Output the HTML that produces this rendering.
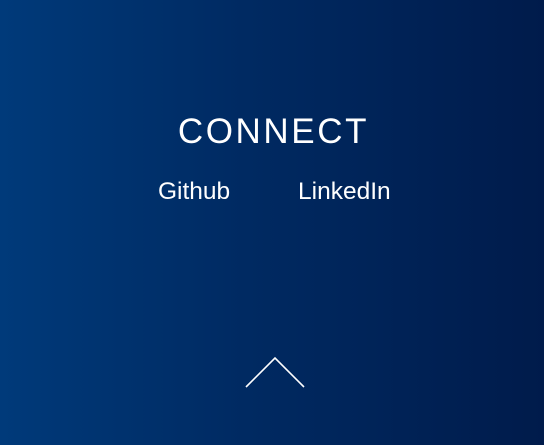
<!DOCTYPE html>
<html><head><style>
html,body{margin:0;padding:0;}
body{width:544px;height:445px;overflow:hidden;background:linear-gradient(to right,#003a7a 0%,#002a62 45%,#001b4b 100%);font-family:"Liberation Sans",sans-serif;color:#fff;position:relative;}
.t{position:absolute;top:112px;left:0;width:544px;text-align:center;font-size:35px;letter-spacing:2.6px;font-weight:300;padding-left:3px;box-sizing:border-box;}
.l{position:absolute;top:178px;font-size:24.5px;}
</style></head><body>
<div class="t">CONNECT</div>
<div class="l" style="left:158px">Github</div>
<div class="l" style="left:298px">LinkedIn</div>
<svg style="position:absolute;left:0;top:0" width="544" height="445"><polyline points="246,387 275,358 304,387" fill="none" stroke="#fff" stroke-width="1.6"/></svg>
</body></html>
